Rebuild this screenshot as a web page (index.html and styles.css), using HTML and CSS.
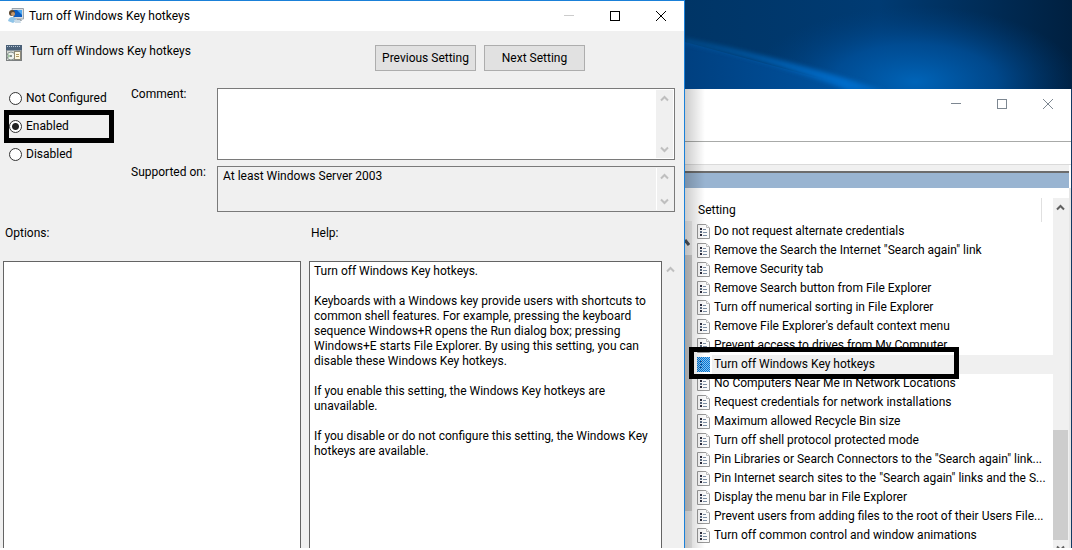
FILE: index.html
```html
<!DOCTYPE html>
<html lang="en">
<head>
    <meta charset="UTF-8">
    <meta name="viewport" content="width=device-width, initial-scale=1.0">
    <title>Turn off Windows Key hotkeys</title>
    <link rel="stylesheet" href="styles.css">
</head>
<body>
    <!-- shared icons -->
    <svg class="icon-defs" aria-hidden="true">
        <symbol id="up" viewBox="0 0 9 7">
            <path d="M1 5.5 L4.5 2 L8 5.5" fill="none" stroke="currentColor" stroke-width="2"/>
        </symbol>
        <symbol id="down" viewBox="0 0 9 7">
            <path d="M1 1.5 L4.5 5 L8 1.5" fill="none" stroke="currentColor" stroke-width="2"/>
        </symbol>
        <symbol id="min" viewBox="0 0 12 12">
            <path d="M1 5.5 H11" stroke="currentColor"/>
        </symbol>
        <symbol id="max" viewBox="0 0 12 12">
            <rect x="1.5" y="1.5" width="9" height="9" fill="none" stroke="currentColor"/>
        </symbol>
        <symbol id="close" viewBox="0 0 12 12">
            <path d="M1 1 L11 11 M11 1 L1 11" stroke="currentColor"/>
        </symbol>
        <symbol id="policy" viewBox="0 0 13 15">
            <path d="M0.5 0.5 H9 L12.5 4 V14.5 H0.5 Z" fill="#fbfbfb" stroke="#999"/>
            <path d="M9.500 1 V3.500 H12" fill="#fff" stroke="#bbb"/>
            <path d="M3 4h2v2h-2z M3 10h2v2h-2z" fill="#2b2b3c"/>
            <path d="M3 7h2v2h-2z" fill="#5a6a80"/>
            <path d="M6 5.5 H9 M6 8.5 H10 M6 11.5 H10" stroke="#7c8ea3"/>
        </symbol>
        <symbol id="policy-selected" viewBox="0 0 13 15">
            <pattern id="dots" width="2" height="2" patternUnits="userSpaceOnUse">
                <path d="M0 0h1v1h-1z M1 1h1v1h-1z" fill="#0078d7"/>
            </pattern>
            <rect width="13" height="15" fill="#8cc0ec"/>
            <rect width="13" height="15" fill="url(#dots)"/>
            <path d="M3 4h2v1h-2z M3 7h2v1h-2z M3 10h2v1h-2z" fill="#0b4f98"/>
        </symbol>
    </svg>

    <div class="desktop">
        <main class="dialog">
            <header class="titlebar">
                <svg class="app-icon" viewBox="0 0 16 16">
                    <path d="M4 0.500 H15.500 V11 H6 Z" fill="#d8dde2" stroke="#9aa4ad"/>
                    <path d="M5 2 H14 V9 H6 Z" fill="#0a5cc0"/>
                    <path d="M9 2 H14 V7 Z" fill="#4ba6f0"/>
                    <path d="M9 11 H13 L14 13 H8 Z" fill="#9ba5ae"/>
                    <circle cx="4" cy="5" r="3" fill="#5a4630"/>
                    <circle cx="5" cy="6" r="2" fill="#c89a6c"/>
                    <path d="M0 13 Q1 9 4 9 Q8 9 8 13 L5 15 Z" fill="#8fc4e8"/>
                    <path d="M6 12 H12 L13 15 H7 Z" fill="#c9dbe8"/>
                </svg>
                <span class="title">Turn off Windows Key hotkeys</span>
                <div class="controls">
                    <button type="button" class="off" aria-label="Minimize"><svg><use href="#min"/></svg></button>
                    <button type="button" aria-label="Maximize"><svg><use href="#max"/></svg></button>
                    <button type="button" aria-label="Close"><svg><use href="#close"/></svg></button>
                </div>
            </header>

            <div class="heading">
                <svg class="app-icon" viewBox="0 0 16 16">
                    <rect x="0.5" y="0.5" width="15" height="15" fill="#d6d8d2" stroke="#7b7f80"/>
                    <rect x="0" y="0" width="16" height="5" fill="#4a6078"/>
                    <path d="M1 1.500 H15" stroke="#b9c8d6" stroke-dasharray="1 1"/>
                    <path d="M1 5.500 H15" stroke="#8e9aa2"/>
                    <circle cx="5" cy="11" r="4" fill="#eef1ee" stroke="#899490"/>
                    <path d="M5 11 L2 9 V13 Z" fill="#9fc09f"/>
                    <circle cx="5" cy="11" r="1" fill="#69746f"/>
                    <rect x="8.500" y="6.500" width="6" height="8" fill="#fff8e0" stroke="#8c8878"/>
                    <path d="M10 9.500 H13 M10 11.500 H13" stroke="#b09a62"/>
                </svg>
                <h1>Turn off Windows Key hotkeys</h1>
                <div class="nav">
                    <button type="button">Previous Setting</button>
                    <button type="button">Next Setting</button>
                </div>
            </div>

            <form class="settings">
                <div class="states">
                    <label><input type="radio" name="state">Not Configured</label>
                    <label class="marked"><input type="radio" name="state" checked>Enabled</label>
                    <label><input type="radio" name="state">Disabled</label>
                </div>
                <label class="field-label" for="comment">Comment:</label>
                <div class="field">
                    <textarea id="comment"></textarea>
                    <div class="scroll">
                        <svg><use href="#up"/></svg>
                        <svg><use href="#down"/></svg>
                    </div>
                </div>
                <label class="field-label" for="supported">Supported on:</label>
                <div class="field readonly">
                    <textarea id="supported" readonly>At least Windows Server 2003</textarea>
                    <div class="scroll">
                        <svg><use href="#up"/></svg>
                        <svg><use href="#down"/></svg>
                    </div>
                </div>
            </form>

            <div class="panels">
                <h2>Options:</h2>
                <h2>Help:</h2>
                <div class="panel"></div>
                <div class="panel help">
                    <p>Turn off Windows Key hotkeys.</p>
                    <p>Keyboards with a Windows key provide users with shortcuts to common shell features. For example, pressing the keyboard sequence Windows+R opens the Run dialog box; pressing Windows+E starts File Explorer. By using this setting, you can disable these Windows Key hotkeys.</p>
                    <p>If you enable this setting, the Windows Key hotkeys are unavailable.</p>
                    <p>If you disable or do not configure this setting, the Windows Key hotkeys are available.</p>
                </div>
                <div class="scroll"><svg><use href="#up"/></svg></div>
            </div>
        </main>

        <div class="behind">
            <svg class="wallpaper" viewBox="0 0 387 89" preserveAspectRatio="none" aria-hidden="true">
                <defs>
                    <linearGradient id="sky" x1="0" y1="0" x2="1" y2="0">
                        <stop offset="0" stop-color="#003566"/>
                        <stop offset="0.500" stop-color="#003b73"/>
                        <stop offset="1" stop-color="#002040"/>
                    </linearGradient>
                    <radialGradient id="glow">
                        <stop offset="0" stop-color="#0064b8"/>
                        <stop offset="0.500" stop-color="#0054a2" stop-opacity="0.700"/>
                        <stop offset="1" stop-color="#004080" stop-opacity="0"/>
                    </radialGradient>
                    <linearGradient id="ray" x1="0" y1="0" x2="1" y2="0">
                        <stop offset="0" stop-color="#00569f" stop-opacity="0.500"/>
                        <stop offset="0.800" stop-color="#006cca"/>
                        <stop offset="1" stop-color="#0064bc"/>
                    </linearGradient>
                    <linearGradient id="low" x1="0" y1="0" x2="1" y2="0">
                        <stop offset="0" stop-color="#004080"/>
                        <stop offset="1" stop-color="#0054a2"/>
                    </linearGradient>
                    <filter id="soft"><feGaussianBlur stdDeviation="2"/></filter>
                </defs>
                <rect width="387" height="89" fill="url(#sky)"/>
                <ellipse cx="230" cy="82" rx="165" ry="76" fill="url(#glow)"/>
                <path d="M0 42 L175 89 H0 Z" fill="url(#low)"/>
                <path d="M0 38 Q100 58 200 91 H165 Q90 62 0 44 Z" fill="url(#ray)" filter="url(#soft)"/>
            </svg>
            <section class="editor">
                <header class="titlebar">
                    <div class="controls">
                        <button type="button" aria-label="Minimize"><svg><use href="#min"/></svg></button>
                        <button type="button" aria-label="Maximize"><svg><use href="#max"/></svg></button>
                        <button type="button" aria-label="Close"><svg><use href="#close"/></svg></button>
                    </div>
                </header>
                <div class="menubar"></div>
                <div class="toolbar"></div>
                <div class="band"></div>
                <div class="body">
                    <div class="tree-scroll">
                        <svg viewBox="0 0 5 8"><path d="M0 1 L4 6" stroke="#4a5058" stroke-width="3"/></svg>
                        <div class="tree-thumb"></div>
                    </div>
                    <div class="list">
                        <div class="list-head">Setting</div>
                        <ul>
                            <li><svg><use href="#policy"/></svg><span>Do not request alternate credentials</span></li>
                            <li><svg><use href="#policy"/></svg><span>Remove the Search the Internet "Search again" link</span></li>
                            <li><svg><use href="#policy"/></svg><span>Remove Security tab</span></li>
                            <li><svg><use href="#policy"/></svg><span>Remove Search button from File Explorer</span></li>
                            <li><svg><use href="#policy"/></svg><span>Turn off numerical sorting in File Explorer</span></li>
                            <li><svg><use href="#policy"/></svg><span>Remove File Explorer's default context menu</span></li>
                            <li><svg><use href="#policy"/></svg><span>Prevent access to drives from My Computer</span></li>
                            <li class="selected"><svg><use href="#policy-selected"/></svg><span>Turn off Windows Key hotkeys</span></li>
                            <li><svg><use href="#policy"/></svg><span>No Computers Near Me in Network Locations</span></li>
                            <li><svg><use href="#policy"/></svg><span>Request credentials for network installations</span></li>
                            <li><svg><use href="#policy"/></svg><span>Maximum allowed Recycle Bin size</span></li>
                            <li><svg><use href="#policy"/></svg><span>Turn off shell protocol protected mode</span></li>
                            <li><svg><use href="#policy"/></svg><span>Pin Libraries or Search Connectors to the "Search again" link...</span></li>
                            <li><svg><use href="#policy"/></svg><span>Pin Internet search sites to the "Search again" links and the S...</span></li>
                            <li><svg><use href="#policy"/></svg><span>Display the menu bar in File Explorer</span></li>
                            <li><svg><use href="#policy"/></svg><span>Prevent users from adding files to the root of their Users File...</span></li>
                            <li><svg><use href="#policy"/></svg><span>Turn off common control and window animations</span></li>
                        </ul>
                    </div>
                    <div class="list-scroll">
                        <svg><use href="#up"/></svg>
                        <div class="thumb"></div>
                        <svg><use href="#down"/></svg>
                    </div>
                </div>
            </section>
        </div>
    </div>
</body>
</html>
```

FILE: styles.css
```css
*, *::before, *::after {
    box-sizing: border-box;
}

body {
    margin: 0;
    background-color: #fff;
    color: #000;
    font-family: Roboto, "Open Sans", sans-serif;
    font-size: 12px;
    line-height: 15px;
}

button, textarea {
    font: inherit;
    color: inherit;
}

h1, h2 {
    margin: 0;
    font-size: 12px;
    font-weight: normal;
}

.icon-defs {
    position: absolute;
    width: 0;
    height: 0;
}

.desktop {
    display: grid;
    grid-template-columns: 685fr 387fr;
    height: calc(100vh - 2px);
    overflow: hidden;
}

/* policy dialog */
.dialog {
    display: flex;
    flex-direction: column;
    min-width: 0;
    min-height: 0;
    background-color: #f0f0f0;
    border-top: 1px solid #1a80d8;
    border-right: 1px solid #1a80d8;
}

.titlebar {
    display: flex;
    align-items: center;
    height: 30px;
    padding-left: 8px;
    background-color: #fff;
}

.app-icon {
    width: 16px;
    height: 16px;
    margin-right: 5px;
    flex: none;
}

.controls {
    display: flex;
    margin-left: auto;
}

.controls button {
    display: flex;
    align-items: center;
    justify-content: center;
    width: 46px;
    height: 28px;
    padding: 0;
    border: none;
    background: none;
}

.controls svg {
    width: 12px;
    height: 12px;
}

.controls .off {
    color: #ccc;
}

.heading {
    display: flex;
    padding: 14px 99px 0 6px;
}

.heading h1 {
    padding-left: 3px;
    line-height: 12px;
}

.nav {
    display: flex;
    gap: 8px;
    margin-left: auto;
}

.nav button {
    width: 101px;
    height: 26px;
    padding: 0;
    border: 1px solid #adadad;
    background-color: #e1e1e1;
}

.settings {
    display: grid;
    grid-template-columns: 123px 86px 1fr;
    grid-template-rows: 72px 46px;
    row-gap: 6px;
    padding: 17px 9px 0 8px;
}

.states {
    grid-row: span 2;
    margin-top: -4px;
}

.states label {
    display: flex;
    align-items: center;
    height: 28px;
}

.states input {
    appearance: none;
    width: 13px;
    height: 13px;
    margin: 0 4px 0 1px;
    border: 1px solid #333;
    border-radius: 50%;
    background-color: #fff;
}

.states input:checked {
    background-image: radial-gradient(circle, #222 3px, #fff 4px);
}

.marked {
    position: relative;
}

.marked::after {
    content: "";
    position: absolute;
    left: -4px;
    top: -2px;
    width: 110px;
    height: 33px;
    border: 5px solid #000;
}

.field-label {
    line-height: 13px;
}

.field {
    display: flex;
    padding: 1px;
    border: 1px solid #7a7a7a;
    background-color: #fff;
}

.field textarea {
    flex: 1;
    min-width: 0;
    padding: 1px 4px;
    border: none;
    outline: none;
    resize: none;
    overflow: hidden;
    background: none;
}

.scroll {
    display: flex;
    flex-direction: column;
    justify-content: space-between;
    align-items: center;
    width: 17px;
    padding: 5px 1px 5px 0;
    background-color: #f0f0f0;
    color: #bfbfbf;
}

.scroll svg, .list-scroll svg {
    width: 9px;
    height: 7px;
    flex: none;
}

.readonly {
    background-color: #f0f0f0;
}

.readonly .scroll {
    border-left: 1px solid #fff;
}

.panels {
    flex: 1;
    min-height: 0;
    display: grid;
    grid-template-columns: 298fr 353fr 14px;
    grid-template-rows: 35px 1fr;
    column-gap: 8px;
    padding: 14px 0 0 3px;
}

.panels h2 {
    padding-left: 2px;
}

.panels h2:nth-child(2) {
    grid-column: span 2;
}

.panel {
    border: 1px solid #646464;
    border-bottom: none;
    background-color: #fff;
}

.help {
    padding: 2px 4px;
    overflow: hidden;
}

.help p {
    margin: 0 0 15px;
}

.panels .scroll {
    justify-content: flex-start;
    margin-left: -8px;
}

/* window behind the dialog */
.behind {
    display: flex;
    flex-direction: column;
    min-width: 0;
    min-height: 0;
    background-color: #123a63;
}

.wallpaper {
    display: block;
    width: 100%;
    height: 89px;
    flex: none;
}

.editor {
    position: relative;
    flex: 1;
    min-height: 0;
    display: flex;
    flex-direction: column;
    margin-right: 1px;
    background-color: #fff;
}

/* shadow cast by the dialog */
.editor::before {
    content: "";
    position: absolute;
    z-index: 1;
    left: 0;
    top: 0;
    bottom: 0;
    width: 20px;
    background: linear-gradient(to right, rgba(0, 0, 0, 0.2), rgba(0, 0, 0, 0));
}

.editor .controls {
    color: #7d8791;
}

.menubar {
    height: 23px;
    border-bottom: 1px solid #a8aaa8;
}

.toolbar {
    height: 23px;
    border-bottom: 1px solid #dadada;
}

.band {
    height: 23px;
    margin-right: 2px;
    border-top: 6px solid #f0f0f0;
    background-color: #99b4d1;
    box-shadow: inset 0 2px #6c6c6c;
}

.body {
    flex: 1;
    min-height: 0;
    display: flex;
    border-right: 2px solid #e6e6e6;
}

.tree-scroll {
    display: flex;
    flex-direction: column;
    width: 7px;
    margin-top: 33px;
    padding: 18px 0 37px;
    background-color: #eee;
}

.tree-scroll svg {
    width: 5px;
    height: 8px;
    margin-bottom: 8px;
    flex: none;
}

.tree-thumb {
    flex: 1;
    background-color: #cdcdcd;
}

.list {
    flex: 1;
    min-width: 0;
    padding: 10px 0 0 5px;
}

.list-head {
    height: 24px;
    margin-right: 11px;
    padding-left: 1px;
    border-right: 1px solid #e0e0e0;
    line-height: 24px;
}

.list ul {
    margin: 0;
    padding: 0;
    list-style: none;
}

.list li {
    display: flex;
    align-items: center;
    height: 19px;
    white-space: nowrap;
}

.list li svg {
    width: 13px;
    height: 15px;
    margin-right: 2px;
    flex: none;
}

.list li span {
    flex: 1;
    padding-left: 2px;
    line-height: 19px;
}

.list .selected {
    position: relative;
}

.selected span {
    background-color: #f0f0f0;
}

.selected::after {
    content: "";
    position: absolute;
    left: -8px;
    top: -8px;
    width: 270px;
    height: 32px;
    border: 5px solid #000;
}

.list-scroll {
    display: flex;
    flex-direction: column;
    align-items: center;
    width: 16px;
    margin: 10px 0 -4px;
    padding: 6px 1px 0 0;
    background-color: #f0f0f0;
    color: #606060;
}

.thumb {
    width: 100%;
    height: 110px;
    margin: auto 0 5px;
    background-color: #cdcdcd;
}
```
